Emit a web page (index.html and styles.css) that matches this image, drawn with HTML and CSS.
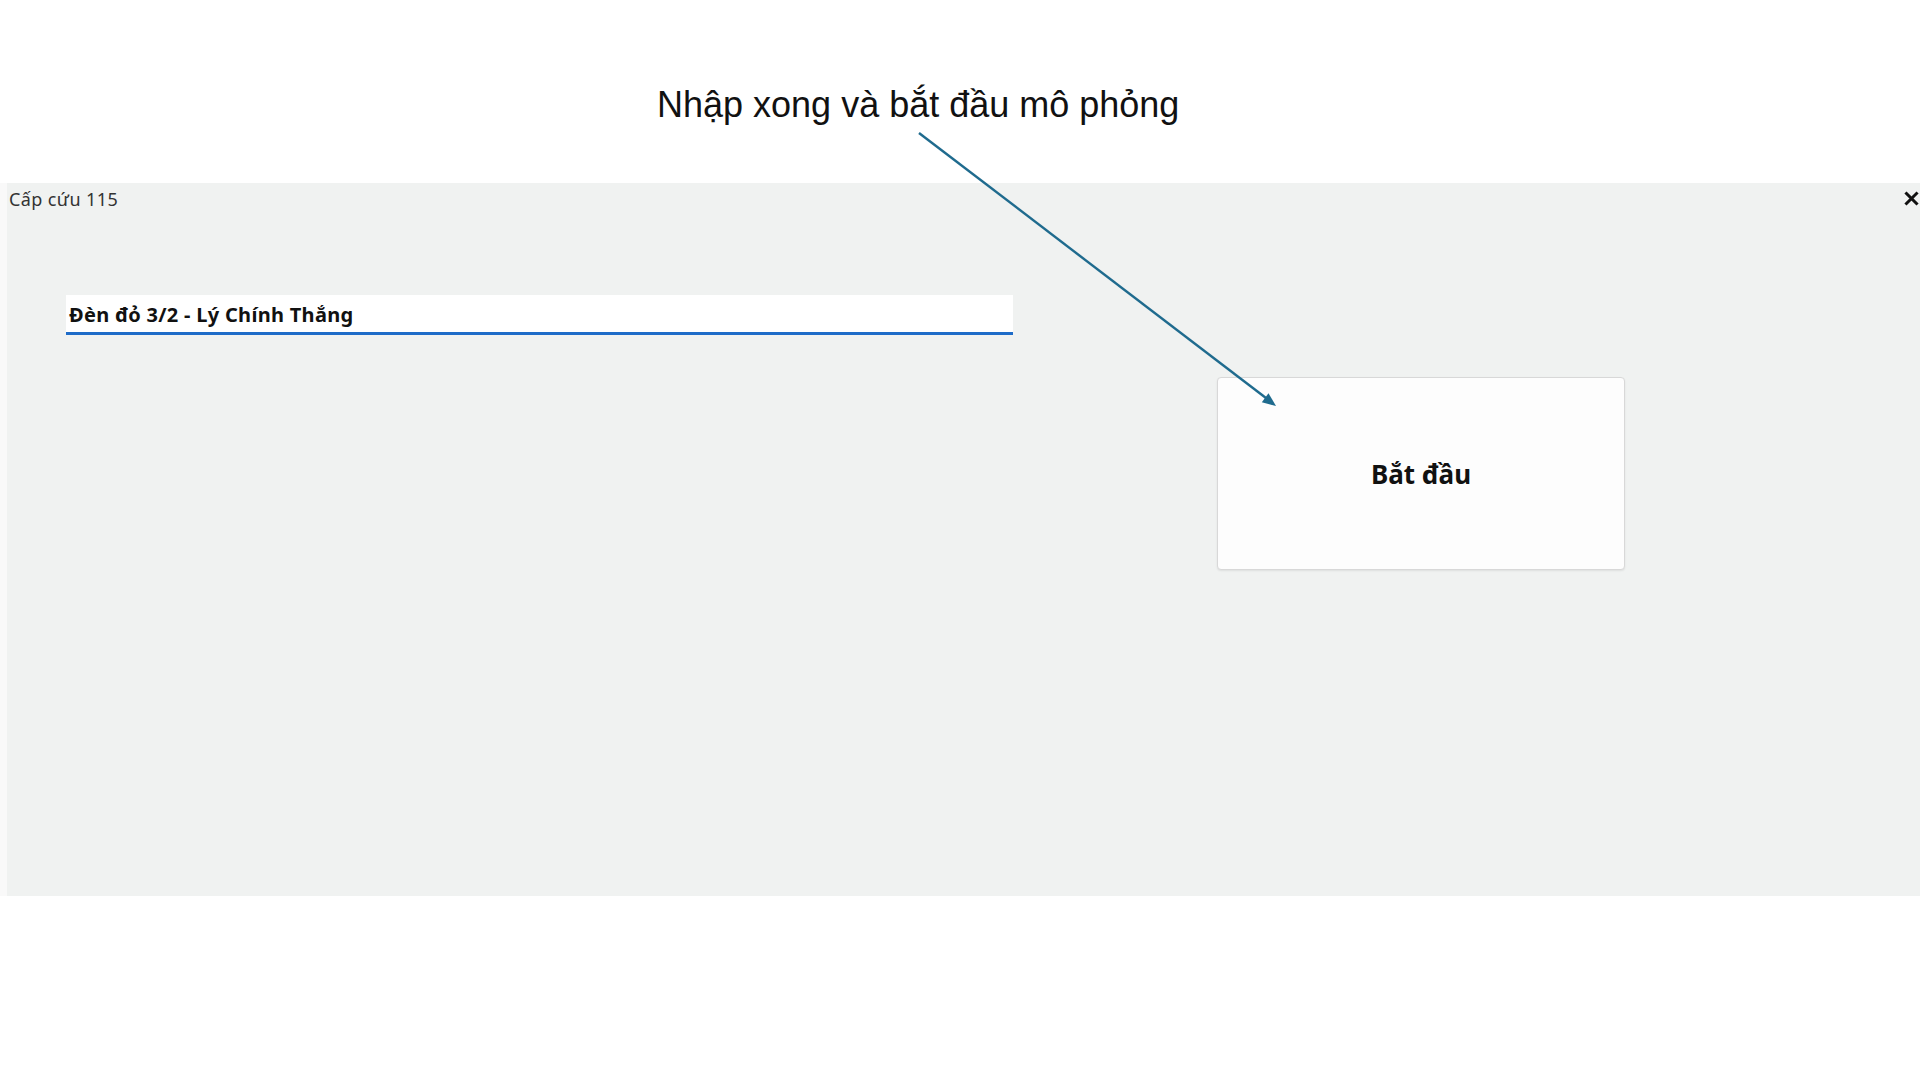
FILE: index.html
```html
<!DOCTYPE html>
<html lang="vi">
<head>
<meta charset="utf-8">
<title>Cấp cứu 115</title>
<link rel="stylesheet" href="styles.css">
</head>
<body>
<div class="page">
  <div class="window">
    <div class="titlebar">
      <span class="title">Cấp cứu 115</span>
      <svg class="close" width="15" height="15" viewBox="0 0 15 15"><path d="M2.5 2.5 L12.5 12.5 M12.5 2.5 L2.5 12.5" stroke="#111" stroke-width="3" stroke-linecap="square"/></svg>
    </div>
    <div class="content">
      <div class="field">Đèn đỏ 3/2 - Lý Chính Thắng</div>
      <button class="start">Bắt đầu</button>
    </div>
  </div>
  <div class="note">Nhập xong và bắt đầu mô phỏng</div>
  <svg class="arrow" width="1920" height="1080" viewBox="0 0 1920 1080">
    <line x1="919" y1="133" x2="1266" y2="398" stroke="#1f6b8e" stroke-width="2.4"/>
    <polygon points="1276,406 1268.5,393.2 1261.8,402.2" fill="#1f6b8e"/>
  </svg>
</div>
</body>
</html>
```
FILE: styles.css
```css
html, body {
  margin: 0;
  padding: 0;
  background: #ffffff;
}
.page {
  position: relative;
  width: 1920px;
  height: 1080px;
  overflow: hidden;
  padding-top: 183px;
  box-sizing: border-box;
  background: linear-gradient(to right, #f9f9f9 0, #f9f9f9 7px, #ffffff 7px);
  background-size: 100% 713px;
  background-position: 0 183px;
  background-repeat: no-repeat;
}
.window {
  margin-left: 7px;
  width: 1913px;
  height: 713px;
  background: #f0f2f1;
  display: flex;
  flex-direction: column;
}
.titlebar {
  display: flex;
  justify-content: space-between;
  align-items: flex-start;
  padding: 5px 1px 0 2px;
  height: 23px;
}
.title {
  font-family: "Noto Sans", "Open Sans", sans-serif;
  font-size: 18px;
  line-height: 23px;
  letter-spacing: 0.4px;
  color: #333;
}
.close {
  margin-top: 3px;
}
.content {
  display: flex;
  align-items: flex-start;
  padding: 84px 0 0 59px;
}
.field {
  width: 944px;
  height: 26px;
  padding: 7px 0 4px 3px;
  background: #ffffff;
  border-bottom: 3px solid #1e6cc8;
  font-family: "Noto Sans", "Open Sans", sans-serif;
  font-weight: 700;
  font-size: 20px;
  line-height: 26px;
  letter-spacing: 0.3px;
  color: #111;
}
.start {
  margin-left: 204px;
  margin-top: 82px;
  width: 408px;
  height: 193px;
  background: #fdfdfd;
  border: 1px solid #d8d8d8;
  border-radius: 4px;
  box-shadow: 0 1px 2px rgba(0,0,0,0.08);
  font-family: "Noto Sans", "Open Sans", sans-serif;
  font-weight: 700;
  font-size: 26px;
  color: #111;
  padding: 0;
}
.note {
  position: absolute;
  left: 657px;
  top: 87px;
  font-family: "Liberation Sans", Arial, sans-serif;
  font-size: 36px;
  line-height: 36px;
  color: #111;
  white-space: nowrap;
}
.arrow {
  position: absolute;
  left: 0;
  top: 0;
  pointer-events: none;
}
```
